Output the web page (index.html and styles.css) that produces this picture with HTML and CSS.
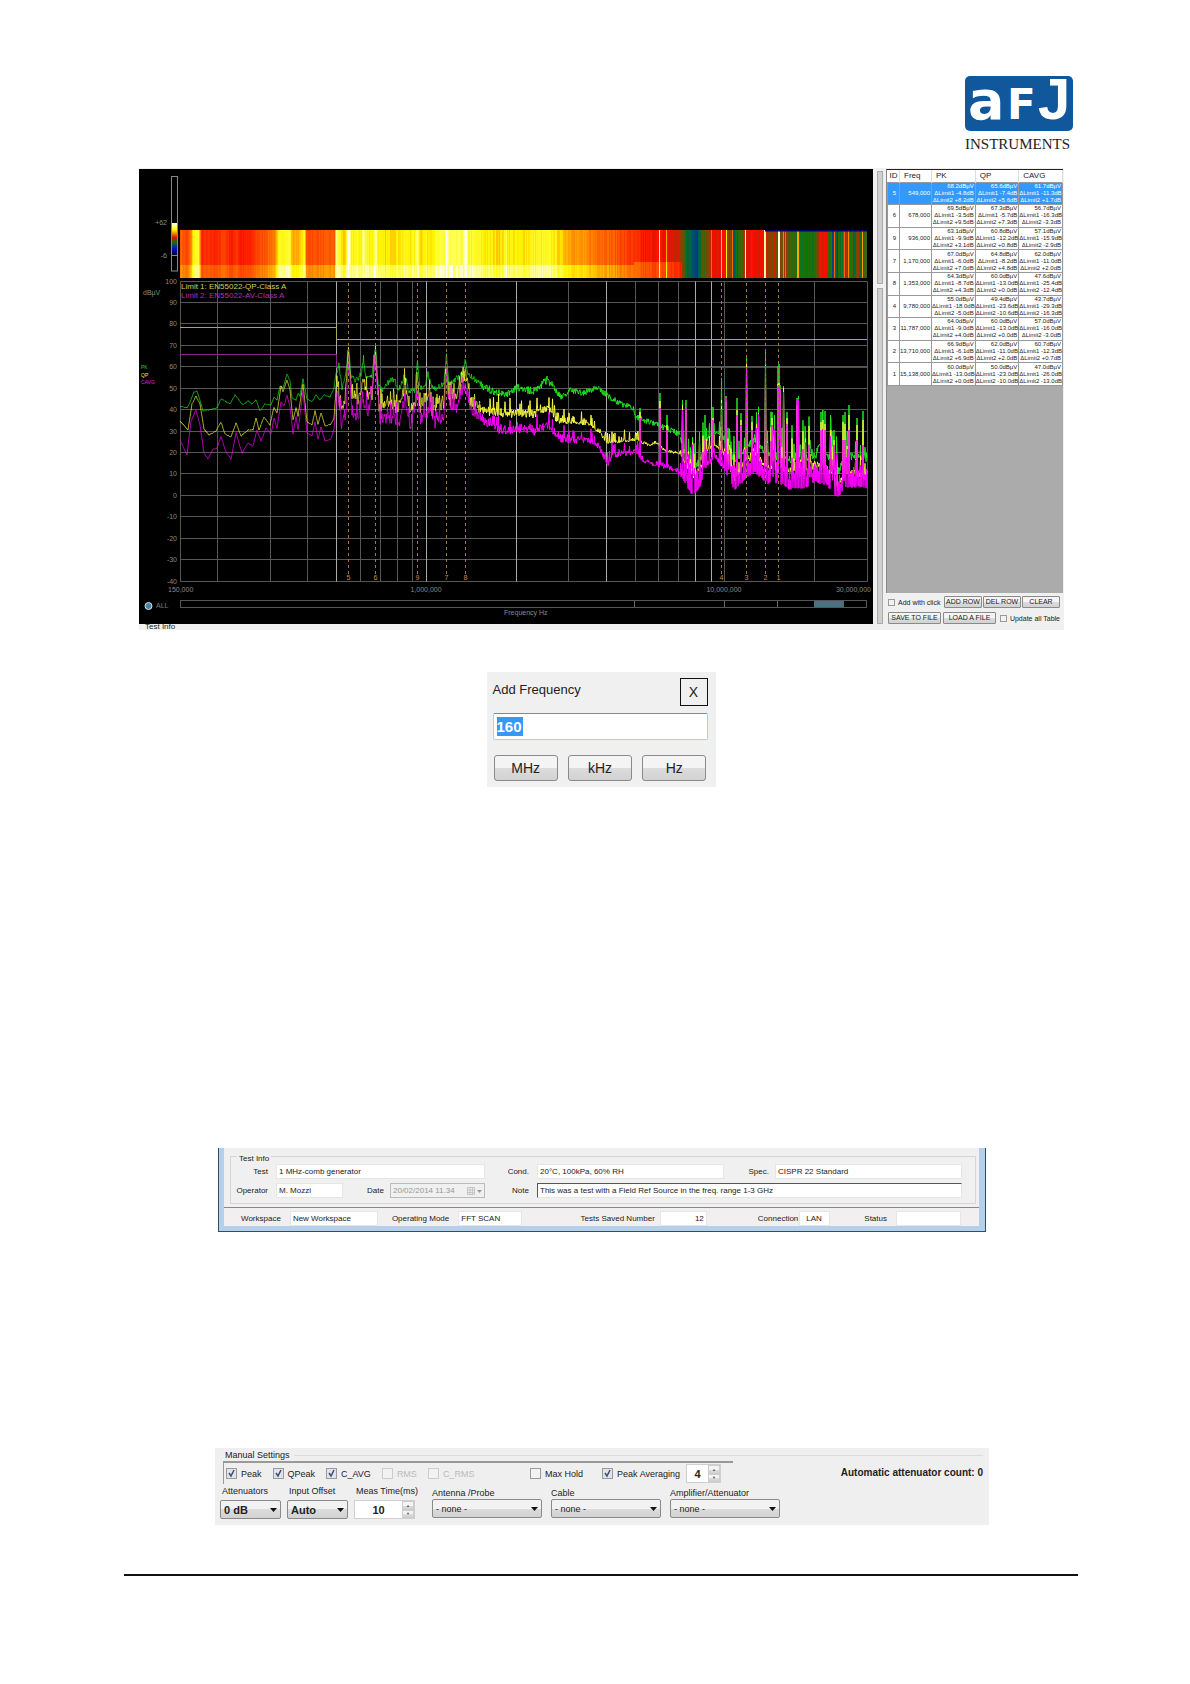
FILE: index.html
```html
<!DOCTYPE html>
<html lang="en">
<head>
    <meta charset="UTF-8">
    <meta name="viewport" content="width=device-width, initial-scale=1.0">
    <title>AFJ Instruments</title>
    <link rel="stylesheet" href="styles.css">
</head>
<body>

<div class="page">
    <header class="header">
        <svg class="logo" viewBox="0 0 108 76" role="img" aria-label="AFJ Instruments">
            <rect width="108" height="55" rx="5" fill="#10579b"/>
            <g fill="#fff" font-weight="bold">
                <text x="3" y="43" font-family="DejaVu Sans" font-size="54">a</text>
                <text x="42" y="43" font-family="DejaVu Sans" font-size="42">F</text>
                <text x="73" y="43" font-family="Liberation Sans" font-size="58">J</text>
            </g>
            <text x="0" y="73" font-family="Liberation Serif" font-size="15" fill="#222">INSTRUMENTS</text>
        </svg>
    </header>

    <!-- analyzer -->
    <section class="analyzer">
        <div class="analyzer-main">
            <svg id="plot" class="plot" viewBox="139 169 734 455"></svg>
            <div class="test-info-cut">Test Info</div>
        </div>
        <div class="splitter"><span class="split-top"></span><span class="split-bottom"></span></div>
        <div class="side">
            <div class="peaks">
                <table>
                    <thead>
                        <tr><th class="c-id">ID</th><th class="c-freq">Freq</th><th>PK</th><th>QP</th><th>CAVG</th></tr>
                    </thead>
                    <tbody id="peakRows"></tbody>
                </table>
            </div>
            <div class="side-row">
                <label class="small-check"><input type="checkbox">Add with click</label>
                <div class="side-buttons">
                    <button>ADD ROW</button>
                    <button>DEL ROW</button>
                    <button>CLEAR</button>
                </div>
            </div>
            <div class="side-row">
                <button class="wide">SAVE TO FILE</button>
                <button class="wide">LOAD A FILE</button>
                <label class="small-check last"><input type="checkbox">Update all Table</label>
            </div>
        </div>
    </section>

    <!-- add frequency -->
    <section class="dialog">
        <div class="dialog-head">
            <label for="freq">Add Frequency</label>
            <button class="close">X</button>
        </div>
        <input type="text" id="freq" value="160">
        <div class="dialog-buttons">
            <button>MHz</button>
            <button>kHz</button>
            <button>Hz</button>
        </div>
    </section>

    <!-- test info -->
    <section class="info">
        <fieldset>
            <legend>Test Info</legend>
            <div class="info-grid">
                <label for="test">Test</label>
                <input type="text" id="test" value="1 MHz-comb generator">
                <label for="cond">Cond.</label>
                <div class="info-pair">
                    <input type="text" id="cond" value="20°C, 100kPa, 60% RH">
                    <label for="spec">Spec.</label>
                    <input type="text" id="spec" value="CISPR 22 Standard">
                </div>
                <label for="operator">Operator</label>
                <div class="info-pair">
                    <input type="text" id="operator" class="operator" value="M. Mozzi">
                    <label for="date">Date</label>
                    <div class="date">
                        <input type="text" id="date" value="20/02/2014 11.34" disabled>
                        <svg width="18" height="10" viewBox="0 0 18 10">
                            <path d="M1.5 1.5h7v7h-7zM1.5 4h7M4 1.5v7M6.5 1.5v7M1.5 6.5h7" fill="none" stroke="#c5c5c5"/>
                            <path d="M11 4h5l-2.5 3z" fill="#999"/>
                        </svg>
                    </div>
                </div>
                <label for="note">Note</label>
                <input type="text" id="note" class="note" value="This was a test with a Field Ref Source in the freq. range 1-3 GHz">
            </div>
        </fieldset>
        <div class="status">
            <label class="s-work" for="workspace">Workspace</label>
            <input type="text" id="workspace" class="w-work" value="New Workspace">
            <label class="s-mode" for="mode">Operating Mode</label>
            <input type="text" id="mode" class="w-mode" value="FFT SCAN">
            <label class="s-saved" for="saved">Tests Saved Number</label>
            <input type="text" id="saved" class="w-saved" value="12">
            <label class="s-conn" for="conn">Connection</label>
            <input type="text" id="conn" class="w-conn" value="LAN">
            <label class="s-status" for="state">Status</label>
            <input type="text" id="state" class="w-state" value="">
        </div>
    </section>

    <!-- manual settings -->
    <section class="manual">
        <div class="manual-title">Manual Settings</div>
        <div class="manual-top">
            <div class="detectors">
                <label><input type="checkbox" checked>Peak</label>
                <label><input type="checkbox" checked>QPeak</label>
                <label><input type="checkbox" checked>C_AVG</label>
                <label class="off"><input type="checkbox" disabled>RMS</label>
                <label class="off"><input type="checkbox" disabled>C_RMS</label>
                <label class="hold"><input type="checkbox">Max Hold</label>
                <label><input type="checkbox" checked>Peak Averaging</label>
                <div class="spin spin-small">
                    <input type="text" value="4" aria-label="Peak Averaging count">
                    <span class="arrows"><button aria-label="Up">▲</button><button aria-label="Down">▼</button></span>
                </div>
            </div>
            <div class="count">Automatic attenuator count: 0</div>
        </div>
        <div class="manual-bottom">
            <div class="field narrow">
                <label for="att">Attenuators</label>
                <select id="att"><option>0 dB</option></select>
            </div>
            <div class="field narrow">
                <label for="offset">Input Offset</label>
                <select id="offset"><option>Auto</option></select>
            </div>
            <div class="field narrow">
                <label for="meas">Meas Time(ms)</label>
                <div class="spin">
                    <input type="text" id="meas" value="10">
                    <span class="arrows"><button aria-label="Up">▲</button><button aria-label="Down">▼</button></span>
                </div>
            </div>
            <div class="field device first">
                <label for="antenna">Antenna /Probe</label>
                <select id="antenna"><option>- none -</option></select>
            </div>
            <div class="field device">
                <label for="cable">Cable</label>
                <select id="cable"><option>- none -</option></select>
            </div>
            <div class="field device">
                <label for="amp">Amplifier/Attenuator</label>
                <select id="amp"><option>- none -</option></select>
            </div>
        </div>
    </section>

    <footer class="footer"></footer>
</div>

<script src="plot.js"></script>
</body>
</html>
```
FILE: styles.css
```css
* {
    box-sizing: border-box;
}
body {
    margin: 0;
    background-color: #fff;
    font-family: "Liberation Sans", Arial, sans-serif;
    color: #222;
}
button, input, select {
    font-family: inherit;
    color: inherit;
    margin: 0;
}
.page {
    padding: 76px 112px 0 124px;
    display: flex;
    flex-direction: column;
}
.header {
    display: flex;
    justify-content: flex-end;
    padding-right: 5px;
    height: 92px;
}
.logo {
    width: 108px;
    height: 76px;
    overflow: visible;
}

/* shared bits */
button {
    background: linear-gradient(#f4f4f4 50%, #dcdcdc 50%, #d2d2d2);
    border: 1px solid #8a8a8a;
    border-radius: 3px;
    padding: 0;
}
input[type="checkbox"] {
    appearance: none;
    flex: none;
    width: 11px;
    height: 11px;
    border: 1px solid #9a9a9a;
    background-color: #f2f2f2;
}
input[type="checkbox"]:checked {
    background: #dfe4ec url("data:image/svg+xml,%3Csvg xmlns='http://www.w3.org/2000/svg' viewBox='0 0 9 9'%3E%3Cpath d='M2 4l2 3 3-6' fill='none' stroke='%23404c70' stroke-width='1.5'/%3E%3C/svg%3E") center no-repeat;
}

/* analyzer */
.analyzer {
    display: flex;
    margin: 0 14px 0 15px;
    background-color: #f0f0f0;
    padding-top: 1px;
}
.analyzer-main {
    flex: 1;
    min-width: 0;
}
.plot {
    display: block;
    width: 100%;
    background-color: #000;
}
.test-info-cut {
    height: 6px;
    padding-left: 6px;
    font-size: 8px;
    line-height: 6px;
}
.splitter {
    width: 13px;
    padding: 2px 3px 6px 4px;
    display: flex;
    flex-direction: column;
    gap: 4px;
}
.splitter span {
    background-color: #d0d0d0;
    border: 1px solid #aaa;
}
.split-top {
    flex: 1;
}
.split-bottom {
    flex: 3;
}
.side {
    width: 178px;
    display: flex;
    flex-direction: column;
    gap: 2px;
    padding-bottom: 5px;
}
.peaks {
    flex: 1;
    margin-right: 1px;
    background-color: #ababab;
    border-top: 1px solid #222;
    border-left: 1px solid #888;
}
.peaks table {
    width: 100%;
    height: 216px;
    table-layout: fixed;
    border-collapse: collapse;
    background-color: #fff;
    font-size: 6px;
    line-height: 7px;
    white-space: nowrap;
}
.peaks th {
    height: 12px;
    padding: 0 0 0 4px;
    font-size: 8px;
    font-weight: normal;
    text-align: left;
    border-right: 1px solid #ddd;
}
.peaks .c-id {
    width: 12px;
    padding-left: 2px;
}
.peaks .c-freq {
    width: 32px;
}
.peaks td {
    padding: 0 1px 0 0;
    text-align: right;
    border: 1px solid #999;
}
.peaks td:first-child {
    padding-right: 3px;
}
.peaks tr.selected {
    background-color: #3399ff;
    color: #fff;
}
.side-row {
    display: flex;
    align-items: center;
    height: 14px;
    padding: 0 4px 0 2px;
    gap: 2px;
    font-size: 7px;
}
.side-row button {
    height: 12px;
    font-size: 7px;
    line-height: 8px;
    border-radius: 1px;
}
.side-buttons {
    flex: 1;
    display: flex;
    gap: 1px;
}
.side-buttons button {
    flex: 1;
}
.side-row .wide {
    width: 53px;
}
.small-check {
    display: flex;
    align-items: center;
    gap: 3px;
    width: 54px;
    white-space: nowrap;
}
.small-check input[type="checkbox"] {
    width: 7px;
    height: 7px;
}
.small-check.last {
    width: auto;
    margin-left: auto;
}

/* add frequency */
.dialog {
    align-self: center;
    width: 229px;
    margin: 42px 0 0;
    padding: 6px 8px 6px 6px;
    background-color: #f0f0f0;
}
.dialog-head {
    display: flex;
    justify-content: space-between;
    font-size: 13px;
    line-height: 24px;
}
.close {
    width: 28px;
    height: 28px;
    border: 1px solid #111;
    border-radius: 0;
    background: #f0f0f0;
    font-size: 14px;
}
.dialog input {
    display: block;
    width: 100%;
    height: 27px;
    margin-top: 7px;
    padding: 0 3px;
    border: 1px solid #aed0e8;
    border-top-color: #5c93c0;
    border-radius: 2px;
    font-size: 15px;
    font-weight: bold;
    color: #fff;
    background: linear-gradient(#3399ff, #3399ff) 3px 3px / 26px 19px no-repeat #fff;
}
.dialog-buttons {
    display: flex;
    gap: 10px;
    margin-top: 15px;
    padding: 0 1px;
}
.dialog-buttons button {
    flex: 1;
    height: 26px;
    font-size: 14px;
}

/* test info */
.info {
    margin: 361px 93px 0 95px;
    border: solid #b5d0ea;
    border-width: 0 6px 5px 5px;
    outline: 1px solid #2b5165;
    clip-path: inset(0 -1px -1px -1px);
    background-color: #f0f0f0;
    font-size: 8px;
}
.info fieldset {
    margin: 0 3px 0 6px;
    padding: 0 13px 5px 4px;
    border: 1px solid #d5d5d5;
}
.info legend {
    margin-left: 2px;
    padding: 6px 2px 0 2px;
    line-height: 10px;
}
.info-grid {
    display: grid;
    grid-template-columns: 33px 209px 36px 1fr;
    column-gap: 8px;
    row-gap: 4px;
    align-items: center;
}
.info label {
    text-align: right;
    white-space: nowrap;
}
.info input {
    min-width: 0;
    width: 100%;
    height: 15px;
    padding: 0 2px;
    border: 1px solid #e6e6e6;
    background-color: #fff;
    font-size: 8px;
}
.info-pair {
    display: flex;
    align-items: center;
    gap: 6px;
}
.info-pair label {
    flex: none;
    width: 39px;
}
.info-pair .operator {
    width: 67px;
    margin-right: -4px;
}
.date {
    flex: 1;
    display: flex;
    align-items: center;
    border: 1px solid #bbb;
}
.info .date input {
    height: 13px;
    border: none;
    background-color: #f0f0f0;
    color: #999;
}
.date svg {
    flex: none;
}
.info .note {
    border-top: 1px solid #555;
    border-left: 1px solid #555;
}
.status {
    display: flex;
    align-items: center;
    margin-top: 3px;
    padding: 3px 18px 0 17px;
    border-top: 1px solid #888;
    background-color: #f2eff0;
}
.status label {
    margin-right: 9px;
    flex: none;
}
.status input {
    height: 15px;
}
.status .w-work {
    width: 88px;
}
.status .s-mode {
    margin-left: 14px;
}
.status .w-mode {
    width: 64px;
}
.status .s-saved {
    margin-left: auto;
    margin-right: 5px;
}
.status .w-saved {
    width: 47px;
    text-align: right;
}
.status .s-conn {
    margin-left: 51px;
    margin-right: 1px;
}
.status .w-conn {
    width: 31px;
    padding-left: 6px;
}
.status .s-status {
    margin-left: 34px;
}
.status .w-state {
    width: 65px;
}

/* manual settings */
.manual {
    margin: 217px 89px 0 91px;
    padding: 2px 6px 6px 5px;
    background-color: #efefef;
    font-size: 9px;
}
.manual-title {
    display: flex;
    align-items: center;
    gap: 4px;
    padding-left: 5px;
    line-height: 10px;
}
.manual-title::after {
    content: "";
    flex: 1;
    border-top: 1px solid #dcdcdc;
}
.manual-top {
    display: flex;
    align-items: center;
    justify-content: space-between;
    padding: 1px 0 0 3px;
}
.detectors {
    display: flex;
    align-items: center;
    gap: 11px;
    width: 510px;
    height: 23px;
    padding: 0 12px 0 2px;
    border-top: 2px solid #999;
    border-left: 1px solid #999;
}
.detectors label {
    display: flex;
    align-items: center;
    gap: 4px;
    white-space: nowrap;
}
.detectors .off {
    color: #bbb;
}
.detectors .off input {
    border-color: #ccc;
}
.detectors .hold {
    margin-left: auto;
    margin-right: 8px;
}
.spin {
    display: flex;
    height: 19px;
    border: 1px solid #d0d0d0;
    background-color: #fff;
}
.spin input {
    flex: 1;
    min-width: 0;
    width: 100%;
    padding: 0;
    border: none;
    background: none;
    text-align: center;
    font-size: 11px;
    font-weight: bold;
}
.spin-small {
    width: 35px;
    margin-left: -5px;
}
.arrows {
    display: flex;
    flex-direction: column;
    width: 12px;
}
.arrows button {
    flex: 1;
    min-height: 0;
    border-color: #ccc;
    border-radius: 0;
    font-size: 4px;
    line-height: 5px;
    color: #555;
}
.count {
    font-size: 10px;
    font-weight: bold;
}
.manual-bottom {
    display: flex;
    align-items: flex-end;
    gap: 6px;
    padding-top: 1px;
}
.field {
    display: flex;
    flex-direction: column;
    white-space: nowrap;
}
.field label {
    line-height: 12px;
}
.narrow {
    width: 61px;
}
.narrow label {
    padding: 0 0 3px 2px;
}
.device {
    width: 110px;
    margin-left: 3px;
    padding-bottom: 1px;
}
.device.first {
    margin-left: 11px;
}
.field select {
    appearance: none;
    height: 19px;
    padding: 0 3px;
    border: 1px solid #8a8a8a;
    border-radius: 2px;
    background: url("data:image/svg+xml,%3Csvg xmlns='http://www.w3.org/2000/svg' width='7' height='4'%3E%3Cpath d='M0 0h7l-3.5 4z' fill='%23111'/%3E%3C/svg%3E") right 3px center no-repeat, linear-gradient(#f2f2f2 50%, #dcdcdc 50%, #d2d2d2);
    font-size: 11px;
    font-weight: bold;
}
.device select {
    font-size: 9px;
    font-weight: normal;
}
.footer {
    margin-top: 49px;
    border-top: 2px solid #111;
}
```
FILE: plot.js
```js
const svg = document.getElementById('plot');
const X0 = 180, X1 = 867, Y0 = 281.5, DB = 2.143;

let seed = 7;
function rnd() {
    seed = (seed * 16807) % 2147483647;
    return seed / 2147483647;
}

function add(name, attrs, text) {
    const el = document.createElementNS('http://www.w3.org/2000/svg', name);
    for (const key in attrs) el.setAttribute(key, attrs[key]);
    if (text !== undefined) el.textContent = text;
    svg.appendChild(el);
    return el;
}
function line(x1, y1, x2, y2, stroke, dash) {
    add('line', {x1, y1, x2, y2, stroke, 'stroke-width': 1, 'stroke-dasharray': dash || 'none'});
}
function label(x, y, text, fill, anchor, size) {
    add('text', {x, y, fill: fill || '#8a8a8a', 'text-anchor': anchor || 'start', 'font-size': size || 7}, text);
}
// linear interpolation over a flat list x0, v0, x1, v1, ...
function at(list, x) {
    for (let i = 2; i < list.length; i += 2) {
        if (x <= list[i]) {
            const t = (x - list[i - 2]) / (list[i] - list[i - 2]);
            return list[i - 1] + t * (list[i + 1] - list[i - 1]);
        }
    }
    return list[list.length - 1];
}
function freqX(f) {
    return 180.3 + Math.log10(f / 0.15) * 298.6;
}

// spectrogram
const map = [[0, 0, 0, 190], [0.12, 0, 70, 130], [0.25, 10, 120, 15], [0.36, 130, 70, 0], [0.45, 250, 10, 0], [0.65, 255, 130, 0], [0.8, 255, 245, 0], [0.9, 255, 255, 90], [1, 255, 255, 255]];
function heat(v) {
    v = Math.max(0, Math.min(1, v));
    let i = 1;
    while (map[i][0] < v) i++;
    const a = map[i - 1], b = map[i], t = (v - a[0]) / (b[0] - a[0]);
    return 'rgb(' + [1, 2, 3].map(k => Math.round(a[k] + t * (b[k] - a[k]))).join(',') + ')';
}
const levels = [180, .6, 187, .54, 191, .66, 193, .82, 198, .85, 201, .5, 220, .5, 222, .56, 232, .47, 236, .54, 240, .47, 252, .49, 256, .55, 262, .56, 275, .65, 279, .83, 289, .86, 292, .7, 299, .72, 304, .84, 306, .56, 334, .58, 336, .9, 339, .84, 343, .74, 346, .8, 348, 1, 351, .82, 361, .82, 363, .98, 365, .84, 373, .82, 375, 1, 377, .85, 380, .77, 395, .79, 415, .82, 417, 1, 419, .78, 444, .86, 446, 1, 449, .87, 463, .88, 465, 1, 468, .85, 483, .8, 500, .77, 505, .81, 520, .78, 537, .82, 553, .81, 562, .74, 575, .68, 600, .62, 615, .58, 635, .5, 645, .46, 665, .45, 680, .39, 685, .28, 690, .16, 697, .15, 702, .33, 711, .42, 728, .41, 733, .18, 738, .24, 745, .4, 755, .43, 765, .4, 780, .38, 785, .4, 789, .28, 815, .25, 819, .44, 826, .43, 829, .25, 832, .16, 841, .2, 843, .4, 850, .27, 867, .3];
const bright = {506: .88, 659: .9, 666: .7, 711: .6, 721: .75, 726: .8, 732: .6, 745: .97, 764: .95, 765: .9, 778: .98, 779: .96, 783: .65, 785: .6, 797: .7, 798: .7, 831: .45, 834: .6, 841: .45, 844: .6, 848: .65, 857: .4, 862: .68};
for (let x = X0; x < X1; x++) {
    const amp = x < 336 ? .02 : x < 560 ? .04 : x < 680 ? .03 : x < 787 ? .06 : x < 829 ? .03 : .1;
    let v = at(levels, x) + (rnd() - .5) * 2 * amp;
    if (bright[x]) v = bright[x];
    const split = x < 634 ? 265 : 262;
    const low = x < 682 ? v + (x < 276 ? .08 : .1) * (v < .9) : v;
    const w = Math.min(2, X1 - x);
    add('rect', {x, y: 230, width: w, height: split - 230, fill: heat(v), 'shape-rendering': 'crispEdges'});
    add('rect', {x, y: split, width: w, height: 277.5 - split, fill: heat(low), 'shape-rendering': 'crispEdges'});
}
add('rect', {x: 765, y: 230, width: 102, height: 1.5, fill: '#000066'});

// colour scale
const defs = add('linearGradient', {id: 'scale', x2: 0, y2: 1});
[['0', '#fff'], ['.2', '#ff0'], ['.45', '#e01000'], ['.62', '#087018'], ['.8', '#0010c0'], ['1', '#000030']].forEach(s => {
    const stop = document.createElementNS('http://www.w3.org/2000/svg', 'stop');
    stop.setAttribute('offset', s[0]);
    stop.setAttribute('stop-color', s[1]);
    defs.appendChild(stop);
});
add('rect', {x: 171.5, y: 176.5, width: 6, height: 94.5, fill: 'none', stroke: '#888'});
add('rect', {x: 172, y: 223, width: 5, height: 32, fill: 'url(#scale)'});
line(171, 255.5, 178, 255.5, '#888');
label(167, 225, '+62', '#8a8a8a', 'end');
label(167, 258, '-6', '#8a8a8a', 'end');

// grid
for (let db = 100; db >= -40; db -= 10) {
    const y = Math.round(Y0 + (100 - db) * DB) - .5;
    line(X0, y, X1 + .5, y, '#555855');
    label(177, y + 2.5, db, '#8a8a8a', 'end');
}
[.15, .2, .3, .4, .5, .6, .7, .8, .9, 1, 2, 3, 4, 5, 6, 7, 8, 9, 10, 20, 30].forEach(f => {
    const x = Math.floor(freqX(f)) + .5;
    line(x, Y0, x, 581.5, [.5, 1, 2, 4, 8, 9].includes(f) ? '#aaa' : '#555855');
});

// traces: the base line, then spikes
const pk = [180, 406, 187, 408, 190, 402, 194, 392, 197, 391, 200, 400, 203, 411, 208, 410, 217, 408, 221, 399, 230, 404, 235, 395, 243, 405, 248, 401, 252, 404, 256, 400, 260, 411, 265, 404, 271, 405, 274, 397, 277, 400, 280, 386, 283, 388, 287, 374, 290, 381, 292, 398, 296, 400, 298, 393, 300, 396, 303, 379, 307, 399, 312, 402, 316, 395, 320, 400, 324, 395, 330, 397, 334, 388, 336, 374, 339, 365, 342, 387, 346, 373, 348.5, 346, 351, 378, 357, 380, 361, 374, 363.5, 358, 366, 378, 372, 376, 375.5, 347, 378, 383, 382, 390, 390, 380, 395, 380, 398, 391, 405, 375, 409, 392, 415, 390, 417.3, 360, 420, 388, 425, 385, 428, 374, 433, 390, 444, 383, 446.5, 353, 449, 384, 457, 378, 463, 373, 465.5, 358, 468, 374, 483, 386, 497, 393, 510, 393, 517, 387, 533, 391, 547, 380, 553, 386, 561, 398, 570, 390, 583, 393, 597, 388, 607, 395, 620, 404, 634, 408, 635, 417, 653, 423, 680, 434, 685, 454, 692, 467, 699, 463, 708, 438, 717, 432, 725, 442, 735, 463, 747, 446, 755, 441, 767, 455, 790, 459, 815, 457, 820, 444, 828, 455, 837, 474, 847, 456, 867, 458];
const qp = [180, 421, 188, 430, 192, 404, 196, 396, 200, 404, 204, 429, 209, 435, 216, 431, 221, 422, 225, 434, 231, 437, 236, 423, 241, 436, 248, 430, 253, 430, 256, 418, 259, 430, 264, 417, 270, 425, 274, 407, 277, 413, 281, 386, 283, 392, 287, 380, 290, 390, 293, 420, 296, 408, 298, 416, 303, 384, 307, 422, 312, 425, 315, 411, 318, 424, 321, 413, 325, 426, 331, 424, 334, 418, 337, 376, 340, 410, 345, 400, 348.5, 354, 352, 395, 359, 400, 363, 377, 368, 398, 372, 395, 375.5, 354, 379, 407, 390, 402, 397, 412, 405, 387, 410, 410, 415, 408, 417.3, 380, 420, 408, 428, 393, 432, 412, 444, 403, 446.5, 364, 449, 401, 458, 394, 465.5, 372, 470, 402, 483, 410, 500, 415, 517, 413, 533, 414, 547, 408, 560, 422, 590, 424, 600, 433, 607, 443, 635, 440, 650, 445, 656, 442, 665, 451, 680, 453, 685, 464, 693, 475, 700, 470, 708, 449, 715, 445, 724, 453, 735, 478, 747, 460, 755, 453, 767, 468, 780, 470, 808, 472, 815, 464, 828, 469, 837, 488, 847, 472, 867, 474];
const av = [180, 440, 187, 455, 191, 421, 196, 410, 200, 425, 204, 453, 208, 459, 213, 449, 217, 448, 221, 437, 226, 452, 231, 459, 236, 433, 242, 453, 248, 443, 253, 446, 257, 430, 261, 441, 266, 428, 271, 434, 274, 418, 277, 428, 281, 402, 284, 406, 287, 395, 290, 407, 293, 434, 296, 416, 298, 430, 303, 392, 307, 433, 312, 436, 315, 422, 318, 439, 321, 427, 325, 441, 331, 439, 334, 429, 337, 392, 341, 424, 346, 412, 348.5, 362, 352, 410, 357, 421, 363, 398, 368, 415, 375.5, 362, 380, 418, 390, 420, 399, 424, 405, 402, 410, 428, 417, 395, 421, 422, 430, 410, 435, 423, 444, 418, 446.5, 370, 449, 409, 457, 409, 465.5, 386, 470, 408, 485, 422, 502, 432, 517, 429, 533, 432, 547, 425, 560, 440, 590, 441, 600, 449, 608, 465, 612, 455, 635, 452, 645, 461, 665, 466, 677, 470, 682, 478, 687, 486, 693, 496, 700, 486, 707, 466, 715, 458, 723, 468, 735, 490, 747, 477, 755, 472, 767, 483, 780, 483, 788, 489, 807, 487, 815, 481, 828, 486, 837, 498, 847, 487, 867, 487];
// tall peaks: x, top of PK, top of QP, top of AV
const peaks = [[640, 408, 412, 418], [660, 393, 401, 408], [667, 415, 425, 430], [682.5, 400, 405, 410], [686, 400, 410, 408], [705, 415, 440, 440], [713, 407, 418, 420], [721.5, 378, 400, 410], [726, 396, 402, 398], [737, 398, 410, 415], [741, 413, 420, 425], [746.5, 355, 362, 368], [752, 416, 422, 430], [765.5, 352, 365, 366], [772, 412, 418, 425], [778, 366, 384, 386], [779, 364, 383, 385], [780, 385, 390, 390], [783.5, 386, 388, 392], [787, 412, 418, 424], [797, 398, 405, 399], [798.5, 396, 404, 399], [821, 412, 422, 430], [823, 410, 420, 445], [825, 411, 424, 430], [831, 421, 430, 445], [834, 430, 440, 445], [843, 415, 422, 440], [845, 412, 424, 440], [849, 405, 415, 430], [857, 418, 425, 440], [863, 411, 420, 445]];

// spike heights shared by the three traces so that they line up
const spikes = [];
for (let i = 0; i < 3000; i++) {
    spikes.push(rnd() < .35 ? Math.pow(rnd(), 2) : 0);
}
function trace(base, which, stroke, from, to, width) {
    let d = '';
    const step = .5;
    for (let x = from, i = (from - X0) * 2; x <= to; x += step, i++) {
        let y = at(base, x);
        let h = 0, j;
        if (x < 336) {
            j = .5;
        } else if (x < 480) {
            j = which ? 6 : 3;
            h = which ? spikes[i] * 20 : 0;
        } else if (x < 560) {
            j = 4;
            h = which ? spikes[i] * 18 : 0;
        } else if (x < 680) {
            j = which === 1 ? 1.5 : 3;
            h = which && x < 640 ? spikes[i] * 12 : 0;
        } else {
            const quiet = x > 706 && x < 724;
            j = which === 2 || quiet ? 1 : 4;
            h = spikes[i] * (quiet ? 20 : 42);
            if (which === 2 && i % 2) h += quiet ? 4 : 14 * rnd() + 7;
        }
        y += (rnd() - .5) * 2 * j - h;
        for (const p of peaks) {
            if (Math.abs(p[0] - x) < .3) y = p[which + 1];
        }
        d += (d ? 'L' : 'M') + x + ' ' + y.toFixed(1);
    }
    add('path', {d, fill: 'none', stroke, 'stroke-width': width, 'stroke-linejoin': 'bevel'});
}
// limits
add('path', {d: 'M180 327.5H336.5V339.5H867', fill: 'none', stroke: '#a8a850'});
add('path', {d: 'M180 354.5H336.5V367.5H867', fill: 'none', stroke: '#902090'});

[[pk, '#1fe81f'], [qp, '#f8f840'], [av, '#ff00ff']].forEach((t, i) => {
    trace(t[0], i, t[1], X0, 480, .7);
    trace(t[0], i, t[1], 480, 680, 1);
    trace(t[0], i, t[1], 680, X1, i === 1 ? .9 : 1);
});

// markers
[['5', 348.5], ['6', 375.5], ['9', 417.5], ['7', 446.5], ['8', 465.5], ['4', 721.5], ['3', 746.5], ['2', 765.5], ['1', 778.5]].forEach(m => {
    line(m[1], 283, m[1], 574, '#a07848', '3 3');
    label(m[1], 580, m[0], '#d09030', 'middle', 7);
});

label(181, 289, 'Limit 1: EN55022-QP-Class A', '#d0d060', 'start', 8);
label(181, 298, 'Limit 2: EN55022-AV-Class A', '#b030b0', 'start', 8);
label(143, 295, 'dBµV');
label(141, 369, 'PK', '#20d020', 'start', 5);
label(141, 377, 'QP', '#f0f040', 'start', 5);
label(141, 384, 'CAVG', '#e020e0', 'start', 5);
label(168, 592, '150,000');
label(426, 592, '1,000,000', '#8a8a8a', 'middle');
label(724, 592, '10,000,000', '#8a8a8a', 'middle');
label(871, 592, '30,000,000', '#8a8a8a', 'end');
label(504, 615, 'Frequency Hz');

// bottom bar
add('rect', {x: 180.5, y: 600.5, width: 686, height: 7, fill: 'none', stroke: '#555'});
add('rect', {x: 814, y: 601, width: 30, height: 6, fill: '#4b7080'});
[634.5, 724.5, 777.5].forEach(x => line(x, 601, x, 607, '#666'));
add('circle', {cx: 148.5, cy: 606, r: 3.5, fill: '#3b88a8', stroke: '#ddd'});
label(156, 608, 'ALL', '#777');

// peak table
const rows = [
    [5, '549,000', 68.2, 65.6, 61.7],
    [6, '678,000', 69.5, 67.3, 56.7],
    [9, '936,000', 63.1, 60.8, 57.1],
    [7, '1,170,000', 67.0, 64.8, 62.0],
    [8, '1,353,000', 64.3, 60.0, 47.6],
    [4, '9,780,000', 55.0, 49.4, 43.7],
    [3, '11,787,000', 64.0, 60.0, 57.0],
    [2, '13,710,000', 66.9, 62.0, 60.7],
    [1, '15,138,000', 60.0, 50.0, 47.0]
];
function delta(v) {
    return (v < -0.01 ? '-' : '+') + Math.abs(v).toFixed(1) + 'dB';
}
document.getElementById('peakRows').innerHTML = rows.map((r, i) =>
    '<tr' + (i === 0 ? ' class="selected"' : '') + '><td>' + r[0] + '</td><td>' + r[1] + '</td>' +
    r.slice(2).map(v => '<td>' + v.toFixed(1) + 'dBµV<br>ΔLimit1 ' + delta(v - 73) + '<br>ΔLimit2 ' + delta(v - 60) + '</td>').join('') +
    '</tr>').join('');
```
